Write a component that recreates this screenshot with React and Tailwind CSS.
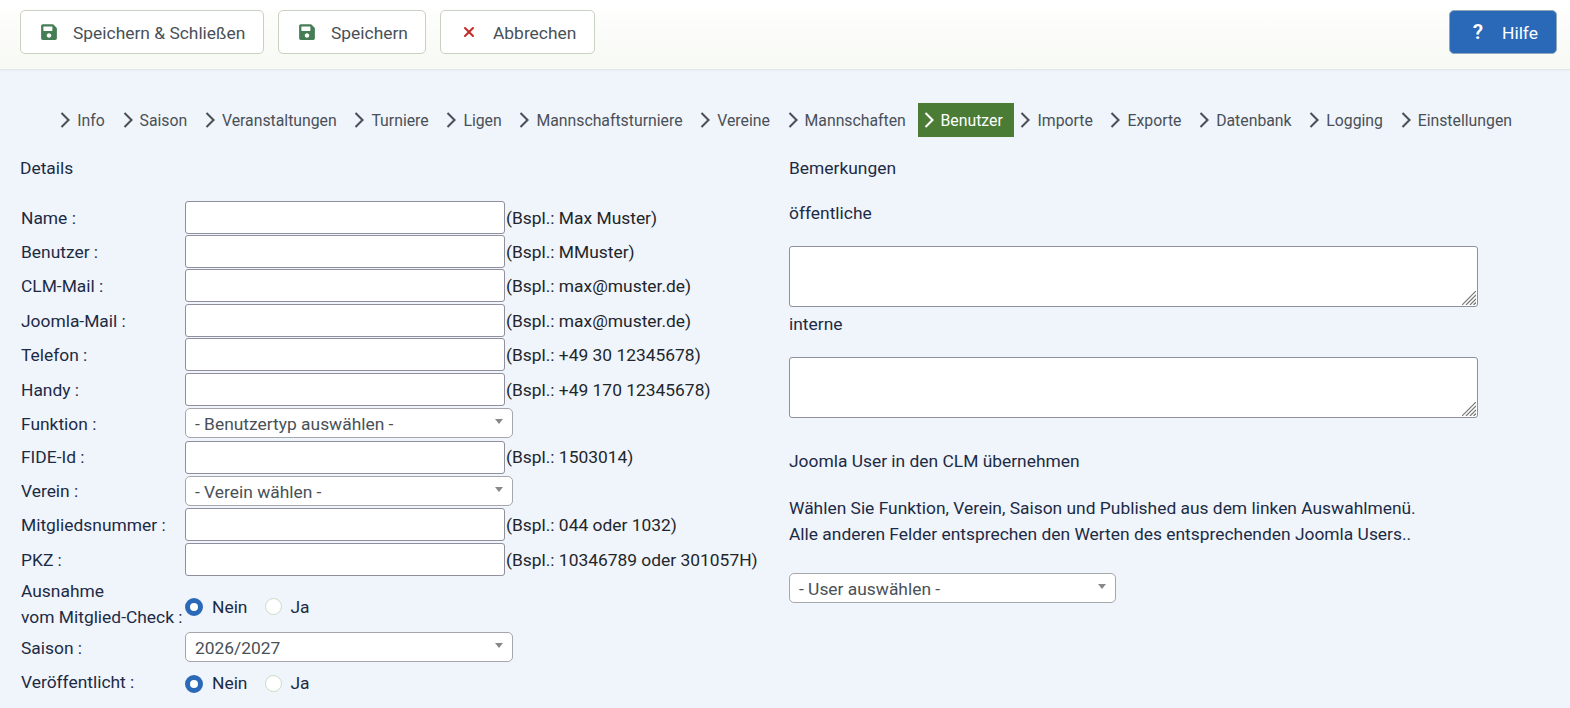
import { X } from "lucide-react";
import { FaSave } from "react-icons/fa";

const navItems = ["Info", "Saison", "Veranstaltungen", "Turniere", "Ligen", "Mannschaftsturniere", "Vereine", "Mannschaften", "Benutzer", "Importe", "Exporte", "Datenbank", "Logging", "Einstellungen"];

function ToolbarButton({ icon, label, className }) {
  return (
    <button className={`h-[44px] flex items-center gap-[16px] bg-white border border-[#c9d1c0] rounded-[5px] text-[#495057] ${className}`}>
      <span className="w-[16px] flex justify-center">{icon}</span>
      <span className="pt-[2px]">{label}</span>
    </button>
  );
}

function TextRow({ label, hint }) {
  return (
    <div className="flex items-center h-[32.4px]">
      <label className="w-[165px] pl-[1px] pt-[1px] shrink-0 text-[#1c2b45] whitespace-nowrap">{label}</label>
      <input type="text" className="w-[320px] h-[33px] shrink-0 bg-white border border-[#8f8f9d] rounded-[3px]" />
      <span className="pl-[1px] pt-[1px] text-[#22262a] whitespace-nowrap">{hint}</span>
    </div>
  );
}

function SelectBox({ value, className }) {
  return (
    <div className={`relative flex items-center bg-white border border-[#a6a6ad] rounded-[5px] pl-[9px] pt-[2px] text-[#495057] ${className}`}>
      <span className="whitespace-nowrap">{value}</span>
      <span className="absolute right-[9px] top-1/2 -translate-y-[4px] w-0 h-0 border-x-[4px] border-x-transparent border-t-[5px] border-t-[#888888]" />
    </div>
  );
}

function SelectRow({ label, value }) {
  return (
    <div className="flex items-center h-[31.5px]">
      <label className="w-[165px] pl-[1px] pt-[1px] shrink-0 text-[#1c2b45]">{label}</label>
      <SelectBox value={value} className="w-[328px] h-[30px]" />
    </div>
  );
}

function RadioPair({ className }) {
  return (
    <div className={`flex items-center text-[#1c2b45] ${className}`}>
      <span className="w-[18px] h-[18px] rounded-full border-[5px] border-[#2a69b8] bg-white" />
      <span className="ml-[9px]">Nein</span>
      <span className="ml-[18px] w-[17px] h-[17px] rounded-full border border-[#c9dcc0] bg-white" />
      <span className="ml-[8px]">Ja</span>
    </div>
  );
}

function NoteBox() {
  return (
    <div className="relative mt-[23px]">
      <textarea className="block w-full h-[61px] resize-none bg-white border border-[#8f8f9d] rounded-[3px]" />
      {/* resize grip */}
      <svg className="absolute right-[2px] bottom-[2px]" width="14" height="14" viewBox="0 0 14 14" stroke="#777777" strokeWidth="1.2">
        <line x1="0" y1="14" x2="14" y2="0" />
        <line x1="4" y1="14" x2="14" y2="4" />
        <line x1="8" y1="14" x2="14" y2="8" />
        <line x1="11.5" y1="14" x2="14" y2="11.5" />
      </svg>
    </div>
  );
}

export default function App() {
  return (
    <div className="min-h-screen bg-[#f0f4fb] text-[17.4px] font-['Roboto',sans-serif] overflow-hidden">
      <header className="h-[69px] flex items-start justify-between pt-[10px] pl-[20px] pr-[13px] bg-gradient-to-b from-white to-[#f7f9f3] shadow-[0_1px_2px_rgba(0,0,0,0.08)]">
        <div className="flex gap-[14px]">
          <ToolbarButton className="w-[244px] pl-[20px]" icon={<FaSave className="text-[#457d54] text-[18px]" />} label="Speichern & Schließen" />
          <ToolbarButton className="w-[148px] pl-[20px]" icon={<FaSave className="text-[#457d54] text-[18px]" />} label="Speichern" />
          <ToolbarButton className="w-[155px] pl-[20px]" icon={<X size={22} strokeWidth={3} className="text-[#c52827]" />} label="Abbrechen" />
        </div>
        <ToolbarButton className="w-[108px] pl-[20px] !bg-[#2a69b8] !text-white !border-[#8fa9b8]" icon={<span className="text-white text-[21px] font-semibold leading-none">?</span>} label="Hilfe" />
      </header>

      <nav className="flex justify-center mt-[34px] h-[34px] pl-[8px]">
        {navItems.map((item) => (
          <a key={item} className={`flex items-center gap-[7px] pl-[6px] pr-[11.7px] text-[15.8px] ${item === "Benutzer" ? "bg-[#4a7c36] text-white" : "text-[#495057]"}`}>
            <svg width="10" height="16" viewBox="0 0 10 16" fill="none" stroke="currentColor" strokeWidth="2.1">
              <polyline points="1.5,1 8.5,8 1.5,15" />
            </svg>
            <span className="pt-[1px]">{item}</span>
          </a>
        ))}
      </nav>

      <main className="flex mt-[22px] pl-[20px]">
        <section className="w-[769px] shrink-0">
          <h3 className="h-[19px] leading-[19px] text-[#1c2b45]">Details</h3>
          <div className="flex flex-col gap-[2px] mt-[23px]">
            <TextRow label="Name :" hint="(Bspl.: Max Muster)" />
            <TextRow label="Benutzer :" hint="(Bspl.: MMuster)" />
            <TextRow label="CLM-Mail :" hint="(Bspl.: max@muster.de)" />
            <TextRow label="Joomla-Mail :" hint="(Bspl.: max@muster.de)" />
            <TextRow label="Telefon :" hint="(Bspl.: +49 30 12345678)" />
            <TextRow label="Handy :" hint="(Bspl.: +49 170 12345678)" />
            <SelectRow label="Funktion :" value="- Benutzertyp auswählen -" />
            <TextRow label="FIDE-Id :" hint="(Bspl.: 1503014)" />
            <SelectRow label="Verein :" value="- Verein wählen -" />
            <TextRow label="Mitgliedsnummer :" hint="(Bspl.: 044 oder 1032)" />
            <TextRow label="PKZ :" hint="(Bspl.: 10346789 oder 301057H)" />
            <div className="flex items-start h-[52px]">
              <label className="w-[165px] pl-[1px] shrink-0 leading-[26px] whitespace-nowrap text-[#1c2b45]">Ausnahme<br />vom Mitglied-Check :</label>
              <RadioPair className="mt-[16px]" />
            </div>
            <SelectRow label="Saison :" value="2026/2027" />
            <div className="flex items-center h-[37px]">
              <label className="w-[165px] pl-[1px] pb-[3px] shrink-0 text-[#1c2b45]">Veröffentlicht :</label>
              <RadioPair />
            </div>
          </div>
        </section>

        <section className="w-[689px] shrink-0 text-[#1c2b45]">
          <h3 className="h-[19px] leading-[19px]">Bemerkungen</h3>
          <p className="mt-[26px] h-[19px] leading-[19px]">öffentliche</p>
          <NoteBox />
          <p className="mt-[8px] h-[19px] leading-[19px]">interne</p>
          <NoteBox />
          <p className="mt-[34px] h-[19px] leading-[19px]">Joomla User in den CLM übernehmen</p>
          <p className="mt-[24px] leading-[26px] whitespace-nowrap">
            Wählen Sie Funktion, Verein, Saison und Published aus dem linken Auswahlmenü.<br />
            Alle anderen Felder entsprechen den Werten des entsprechenden Joomla Users..
          </p>
          <SelectBox value="- User auswählen -" className="w-[327px] h-[30px] mt-[26px]" />
        </section>
      </main>
    </div>
  );
}
